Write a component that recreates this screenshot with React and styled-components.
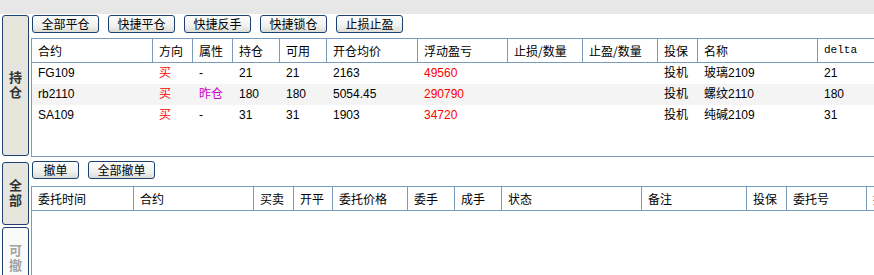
import React from "react";
import styled, { createGlobalStyle } from "styled-components";

const GlobalStyle = createGlobalStyle`
  html, body {
    margin: 0;
    padding: 0;
    background: #ffffff;
    font-family: "Liberation Sans", "Noto Sans CJK SC", sans-serif;
    font-size: 12px;
    color: #000;
    overflow: hidden;
  }
`;

const posColumns = [
  { key: "code", title: "合约", width: 121 },
  { key: "dir", title: "方向", width: 40 },
  { key: "attr", title: "属性", width: 40 },
  { key: "hold", title: "持仓", width: 47 },
  { key: "avail", title: "可用", width: 47 },
  { key: "price", title: "开仓均价", width: 91 },
  { key: "pnl", title: "浮动盈亏", width: 90 },
  { key: "sl", title: "止损/数量", width: 75 },
  { key: "tp", title: "止盈/数量", width: 75 },
  { key: "hedge", title: "投保", width: 40 },
  { key: "name", title: "名称", width: 120 },
  { key: "delta", title: "delta", width: 120, mono: true },
];

const positions = [
  { code: "FG109", dir: "买", attr: "-", hold: "21", avail: "21", price: "2163", pnl: "49560", hedge: "投机", name: "玻璃2109", delta: "21" },
  { code: "rb2110", dir: "买", attr: "昨仓", hold: "180", avail: "180", price: "5054.45", pnl: "290790", hedge: "投机", name: "螺纹2110", delta: "180" },
  { code: "SA109", dir: "买", attr: "-", hold: "31", avail: "31", price: "1903", pnl: "34720", hedge: "投机", name: "纯碱2109", delta: "31" },
];

const orderColumns = [
  { title: "委托时间", width: 102 },
  { title: "合约", width: 120 },
  { title: "买卖", width: 40 },
  { title: "开平", width: 39 },
  { title: "委托价格", width: 75 },
  { title: "委手", width: 47 },
  { title: "成手", width: 47 },
  { title: "状态", width: 140 },
  { title: "备注", width: 105 },
  { title: "投保", width: 40 },
  { title: "委托号", width: 80 },
  { title: "报单来源", width: 100 },
];

function cellTone(key, value) {
  if (key === "dir" || key === "pnl") return "red";
  if (key === "attr" && value === "昨仓") return "purple";
  return "plain";
}

export default function App() {
  return (
    <>
      <GlobalStyle />
      <Page>
        <TopBar />
        <Main>
          <Sidebar>
            <Tab height={141} top={1}><TabLabel>持仓</TabLabel></Tab>
            <Tab height={63} top={6}><TabLabel>全部</TabLabel></Tab>
            <Tab height={63} top={2} muted><TabLabel>可撤</TabLabel></Tab>
          </Sidebar>
          <Content>
            <Section>
              <ButtonBar top={1}>
                <ActionButton>全部平仓</ActionButton>
                <ActionButton>快捷平仓</ActionButton>
                <ActionButton>快捷反手</ActionButton>
                <ActionButton>快捷锁仓</ActionButton>
                <ActionButton>止损止盈</ActionButton>
              </ButtonBar>
              <GridBox top={5} height={119} bottomBorder>
                <HeadRow>
                  {posColumns.map((c) => (
                    <HeadCell key={c.key} w={c.width} mono={c.mono}>
                      {c.title}
                    </HeadCell>
                  ))}
                </HeadRow>
                {positions.map((p, i) => (
                  <DataRow key={p.code} striped={i % 2 === 1}>
                    {posColumns.map((c) => (
                      <DataCell key={c.key} w={c.width} tone={cellTone(c.key, p[c.key])}>
                        {p[c.key] || ""}
                      </DataCell>
                    ))}
                  </DataRow>
                ))}
              </GridBox>
            </Section>
            <Section>
              <ButtonBar top={4}>
                <ActionButton small>撤单</ActionButton>
                <ActionButton>全部撤单</ActionButton>
              </ButtonBar>
              <GridBox top={7} height={100}>
                <HeadRow>
                  {orderColumns.map((c) => (
                    <HeadCell key={c.title} w={c.width}>
                      {c.title}
                    </HeadCell>
                  ))}
                </HeadRow>
              </GridBox>
            </Section>
          </Content>
        </Main>
      </Page>
    </>
  );
}

const Page = styled.div`
  width: 874px;
  height: 275px;
  display: flex;
  flex-direction: column;
  overflow: hidden;
`;

const TopBar = styled.div`
  height: 14px;
  flex: none;
  background: #e7e7e7;
`;

const Main = styled.div`
  flex: 1;
  display: flex;
  min-height: 0;
`;

const Sidebar = styled.div`
  width: 27px;
  flex: none;
  padding: 0 2px 0 2px;
  display: flex;
  flex-direction: column;
`;

const Tab = styled.div`
  flex: none;
  box-sizing: border-box;
  height: ${(p) => p.height}px;
  margin-top: ${(p) => p.top}px;
  border: 1px solid #1d4170;
  border-radius: 3px;
  background: ${(p) => (p.muted ? "#fafafa" : "#e6e5de")};
  color: ${(p) => (p.muted ? "#a3a3a3" : "#333333")};
  display: flex;
  align-items: center;
  justify-content: center;
`;

const TabLabel = styled.span`
  writing-mode: vertical-rl;
  text-orientation: upright;
  font-family: "Noto Sans CJK SC", sans-serif;
  font-weight: bold;
  font-size: 13px;
  letter-spacing: 2px;
  line-height: 13px;
`;

const Content = styled.div`
  flex: 1;
  min-width: 0;
  overflow: hidden;
  display: flex;
  flex-direction: column;
`;

const Section = styled.div`
  display: flex;
  flex-direction: column;
`;

const ButtonBar = styled.div`
  display: flex;
  gap: 9px;
  padding-left: 1px;
  margin-top: ${(p) => p.top}px;
`;

const ActionButton = styled.button`
  box-sizing: border-box;
  width: ${(p) => (p.small ? 47 : 67)}px;
  height: 18px;
  padding: 0;
  border: 1px solid #1d4170;
  border-radius: 3px;
  background: linear-gradient(#fdfdfd, #f1f1ee 60%, #dcdcd6);
  font-family: "Noto Sans CJK SC", sans-serif;
  font-size: 12px;
  line-height: 16px;
  color: #000;
`;

const GridBox = styled.div`
  box-sizing: border-box;
  margin-top: ${(p) => p.top}px;
  height: ${(p) => p.height}px;
  border-left: 1px solid #7a9cbc;
  border-top: 1px solid #7a9cbc;
  border-bottom: ${(p) => (p.bottomBorder ? "1px solid #7a9cbc" : "none")};
  overflow: hidden;
`;

const HeadRow = styled.div`
  display: flex;
  height: 24px;
  box-sizing: border-box;
  border-bottom: 1px solid #7a9cbc;
  width: max-content;
  min-width: 100%;
`;

const HeadCell = styled.div`
  flex: none;
  box-sizing: border-box;
  width: ${(p) => p.w}px;
  border-right: 1px solid #7a9cbc;
  padding-left: 6px;
  line-height: 23px;
  white-space: nowrap;
  overflow: hidden;
  font-family: ${(p) =>
    p.mono ? `"Liberation Mono", monospace` : `"Noto Sans CJK SC", sans-serif`};
  font-size: ${(p) => (p.mono ? "11px" : "12px")};
`;

const DataRow = styled.div`
  display: flex;
  height: 21px;
  background: ${(p) => (p.striped ? "#f4f4f4" : "#ffffff")};
`;

const toneColors = {
  red: "#ff0000",
  purple: "#cc00cc",
  plain: "#000000",
};

const DataCell = styled.div`
  flex: none;
  box-sizing: border-box;
  width: ${(p) => p.w}px;
  padding-left: 6px;
  line-height: 21px;
  white-space: nowrap;
  color: ${(p) => toneColors[p.tone]};
`;
